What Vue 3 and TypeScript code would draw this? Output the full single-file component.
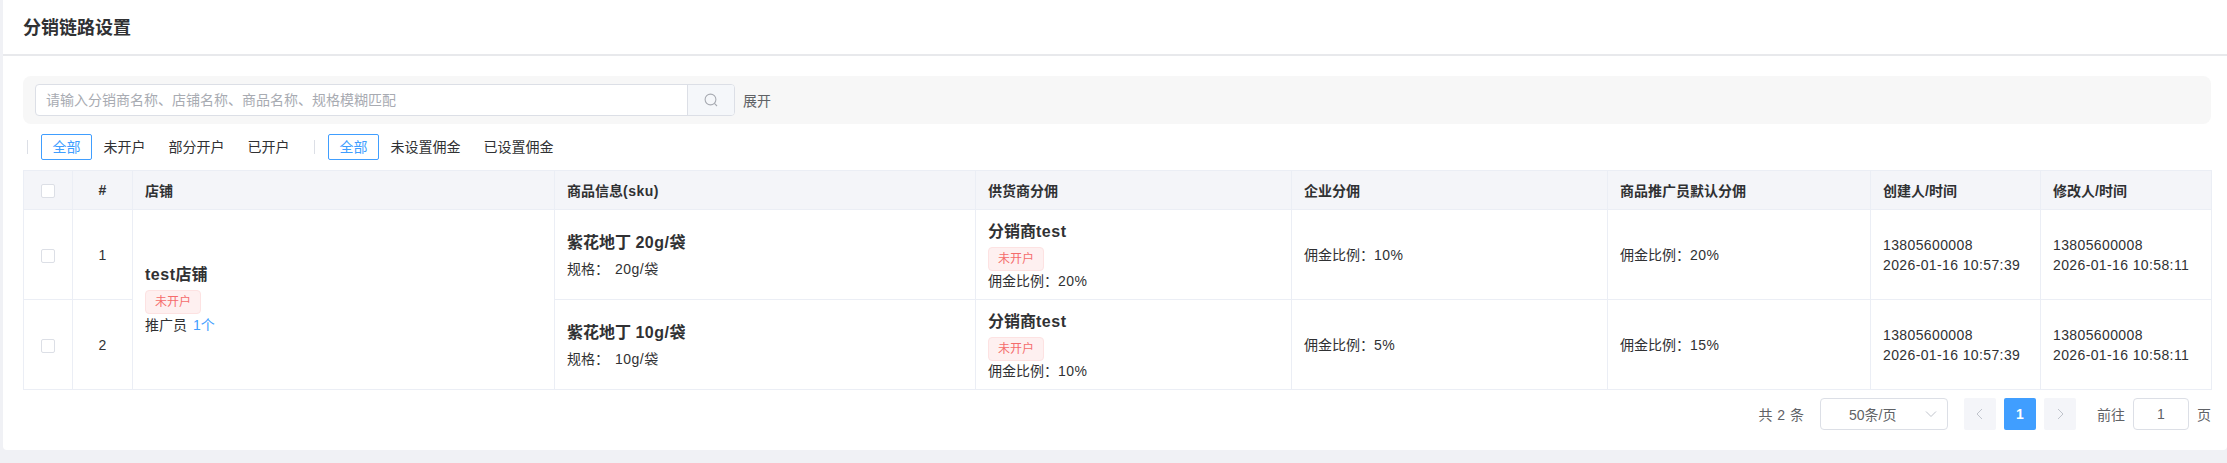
<script setup lang="ts">
interface Row { id: number; size: string; supplierRatio: string; companyRatio: string; promoterRatio: string }
const rows: Row[] = [
  { id: 1, size: '20g', supplierRatio: '20%', companyRatio: '10%', promoterRatio: '20%' },
  { id: 2, size: '10g', supplierRatio: '10%', companyRatio: '5%', promoterRatio: '15%' },
]
const accountTabs = ['全部', '未开户', '部分开户', '已开户']
const commissionTabs = ['全部', '未设置佣金', '已设置佣金']
const columns = [49, 60, 422, 421, 316, 316, 263, 170, 171]
</script>

<template>
  <div class="page">
    <section class="card">
      <h1 class="title">分销链路设置</h1>
      <div class="body">
        <div class="search-panel">
          <div class="search-box">
            <div class="search-input">请输入分销商名称、店铺名称、商品名称、规格模糊匹配</div>
            <div class="search-button">
              <svg width="14" height="14" viewBox="0 0 14 14" fill="none" stroke="#a8abb2" stroke-width="1.1">
                <circle cx="6.5" cy="6.5" r="5.4" />
                <path d="M10.4 10.4 13 13" />
              </svg>
            </div>
          </div>
          <span class="expand">展开</span>
        </div>

        <div class="filters">
          <i class="divider"></i>
          <span v-for="(tab, i) in accountTabs" :key="tab" class="tab" :class="{ active: i === 0 }">{{ tab }}</span>
          <i class="divider second"></i>
          <span v-for="(tab, i) in commissionTabs" :key="'c' + tab" class="tab" :class="{ active: i === 0 }">{{ tab }}</span>
        </div>

        <table class="table">
          <colgroup>
            <col v-for="(w, i) in columns" :key="i" :style="{ width: w + 'px' }" />
          </colgroup>
          <thead>
            <tr>
              <th class="center"><span class="checkbox"></span></th>
              <th class="center">#</th>
              <th>店铺</th>
              <th>商品信息<span class="latin">(sku)</span></th>
              <th>供货商分佣</th>
              <th>企业分佣</th>
              <th>商品推广员默认分佣</th>
              <th>创建人/时间</th>
              <th>修改人/时间</th>
            </tr>
          </thead>
          <tbody>
            <tr v-for="(row, i) in rows" :key="row.id">
              <td class="center"><span class="checkbox"></span></td>
              <td class="center">{{ row.id }}</td>
              <td v-if="i === 0" rowspan="2">
                <div class="name"><span class="latin">test</span>店铺</div>
                <span class="tag">未开户</span>
                <div class="promoter">推广员<a class="link">1个</a></div>
              </td>
              <td class="product">
                <div class="name">紫花地丁 <span class="latin">{{ row.size }}/</span>袋</div>
                <div class="spec">规格：<span class="latin spec-value">{{ row.size }}/</span>袋</div>
              </td>
              <td class="supplier">
                <div class="name">分销商<span class="latin">test</span></div>
                <span class="tag">未开户</span>
                <div class="ratio">佣金比例：<span class="latin">{{ row.supplierRatio }}</span></div>
              </td>
              <td>佣金比例：<span class="latin">{{ row.companyRatio }}</span></td>
              <td>佣金比例：<span class="latin">{{ row.promoterRatio }}</span></td>
              <td class="stamp"><div>13805600008</div><div>2026-01-16 10:57:39</div></td>
              <td class="stamp"><div>13805600008</div><div>2026-01-16 10:58:11</div></td>
            </tr>
          </tbody>
        </table>

        <div class="pagination">
          <span class="total">共 2 条</span>
          <div class="size-select">
            <span>50条/页</span>
            <svg width="12" height="12" viewBox="0 0 12 12" fill="none" stroke="#c0c4cc" stroke-width="1">
              <path d="M1 3.5 6 8.5 11 3.5" />
            </svg>
          </div>
          <button class="page-btn" type="button" aria-label="上一页">
            <svg width="12" height="12" viewBox="0 0 12 12" fill="none" stroke="#c0c4cc" stroke-width="1"><path d="M8 1 3 6 8 11" /></svg>
          </button>
          <button class="page-btn current" type="button">1</button>
          <button class="page-btn" type="button" aria-label="下一页">
            <svg width="12" height="12" viewBox="0 0 12 12" fill="none" stroke="#c0c4cc" stroke-width="1"><path d="M4 1 9 6 4 11" /></svg>
          </button>
          <span class="jump">前往</span>
          <div class="jump-input">1</div>
          <span class="unit">页</span>
        </div>
      </div>
    </section>
  </div>
</template>

<style>
html, body { margin: 0; background: #f0f1f5; }
</style>

<style scoped>
.page {
  width: 2227px;
  height: 463px;
  box-sizing: border-box;
  padding: 0 0 13px 3px;
  background: #f0f1f5;
  font-family: "Liberation Sans", "Noto Sans CJK SC", sans-serif;
  font-size: 14px;
  color: #303133;
}
.card {
  height: 450px;
  box-sizing: border-box;
  background: #fff;
  border-radius: 0 0 4px 4px;
}
.title {
  margin: 0;
  height: 56px;
  box-sizing: border-box;
  padding-left: 20px;
  border-bottom: 2px solid #e8e9ec;
  font-size: 18px;
  line-height: 56px;
  font-weight: 700;
  color: #303133;
}
.body { padding: 20px 16px 0 20px; }
.latin { letter-spacing: 0.5px; }
.search-panel {
  display: flex;
  align-items: center;
  height: 48px;
  padding-left: 12px;
  border-radius: 8px;
  background: #f7f7f7;
}
.search-box {
  display: flex;
  width: 700px;
  height: 32px;
  box-sizing: border-box;
  border: 1px solid #dcdfe6;
  border-radius: 4px;
  background: #fff;
}
.search-input {
  flex: 1;
  padding-left: 10px;
  line-height: 30px;
  font-size: 14px;
  color: #a8abb2;
}
.search-button {
  display: flex;
  align-items: center;
  justify-content: center;
  width: 46px;
  border-left: 1px solid #dcdfe6;
  background: #f5f7fa;
  border-radius: 0 3px 3px 0;
}
.expand { margin-left: 8px; color: #606266; }
.filters {
  display: flex;
  align-items: center;
  height: 26px;
  margin-top: 10px;
  padding-left: 4px;
  color: #303133;
}
.divider {
  width: 1px;
  height: 14px;
  margin-right: 13px;
  background: #dcdfe6;
}
.divider.second { margin: 0 13px; }
.tab {
  box-sizing: border-box;
  height: 26px;
  padding: 0 10.5px;
  line-height: 24px;
  border: 1px solid transparent;
  border-radius: 2px;
  white-space: nowrap;
}
.tab.active { color: #409eff; border-color: #409eff; }
.table {
  width: 2188px;
  margin-top: 10px;
  table-layout: fixed;
  border-collapse: separate;
  border-spacing: 0;
  border-top: 1px solid #ebeef5;
  border-left: 1px solid #ebeef5;
}
th, td {
  box-sizing: border-box;
  padding: 0 12px;
  border-right: 1px solid #ebeef5;
  border-bottom: 1px solid #ebeef5;
  text-align: left;
  color: #303133;
}
th {
  height: 39px;
  background: #f4f5f9;
  font-size: 14px;
  font-weight: 700;
  color: #303133;
}
td { height: 90px; line-height: 20px; font-weight: 400; }
.center { padding: 0; text-align: center; }
.checkbox {
  display: inline-block;
  width: 14px;
  height: 14px;
  box-sizing: border-box;
  border: 1px solid #dcdfe6;
  border-radius: 2px;
  background: #fff;
  vertical-align: middle;
}
.product { padding-top: 3px; }
.supplier { padding-top: 1px; }
.stamp { letter-spacing: 0.38px; }
.name { font-size: 16px; line-height: 24px; font-weight: 700; color: #303133; }
.spec { line-height: 24px; margin-top: 2px; }
.spec-value { margin-left: 6px; }
.tag {
  display: block;
  width: 56px;
  height: 24px;
  box-sizing: border-box;
  margin-top: 3px;
  border: 1px solid #fde2e2;
  border-radius: 4px;
  background: #fef0f0;
  color: #f56c6c;
  font-size: 12px;
  line-height: 22px;
  text-align: center;
}
.promoter { line-height: 22px; }
.ratio { line-height: 20px; }
.link { margin-left: 6px; color: #409eff; }
.pagination {
  display: flex;
  align-items: center;
  justify-content: flex-end;
  height: 32px;
  margin-top: 8px;
  width: 2188px;
  color: #606266;
}
.total { margin-right: 16px; word-spacing: 1px; }
.size-select {
  display: flex;
  align-items: center;
  justify-content: space-between;
  width: 128px;
  height: 32px;
  box-sizing: border-box;
  padding: 0 10px 0 28px;
  border: 1px solid #dcdfe6;
  border-radius: 4px;
}
.page-btn {
  display: flex;
  align-items: center;
  justify-content: center;
  width: 32px;
  height: 32px;
  margin: 0 0 0 8px;
  padding: 0;
  border: 0;
  border-radius: 2px;
  background: #f4f5f9;
  font: inherit;
  color: #606266;
}
.size-select + .page-btn { margin-left: 16px; }
.page-btn.current { background: #409eff; color: #fff; font-weight: 700; }
.jump { margin-left: 21px; }
.jump-input {
  width: 56px;
  height: 32px;
  box-sizing: border-box;
  margin-left: 8px;
  border: 1px solid #dcdfe6;
  border-radius: 4px;
  line-height: 30px;
  text-align: center;
}
.unit { margin-left: 8px; }
</style>
